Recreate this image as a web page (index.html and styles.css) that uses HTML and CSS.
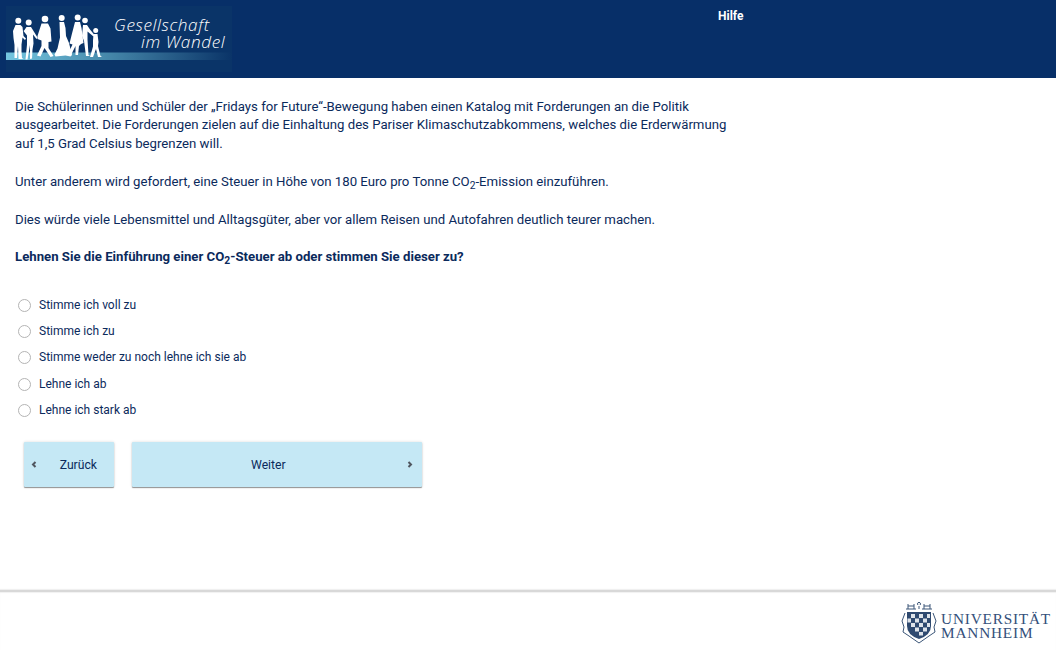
FILE: index.html
```html
<!doctype html>
<html>
<head>
    <meta charset="utf-8">
    <link rel="stylesheet" href="styles.css">
</head>
<body>
    <header class="top">
        <div class="logo">
            <svg class="logo-art" width="226" height="66" viewBox="6 6 226 66">
                <defs>
                    <linearGradient id="bar" x1="0" x2="1" y1="0" y2="0">
                        <stop offset="0" stop-color="#74c6e0"/>
                        <stop offset="0.4" stop-color="#4b8fb0"/>
                        <stop offset="1" stop-color="#0a3468"/>
                    </linearGradient>
                </defs>
                <rect x="6" y="52.500" width="226" height="7.500" fill="url(#bar)"/>
                <g fill="#fff">
                    <circle cx="18.300" cy="20.800" r="3"/>
                    <path d="M15.500 25l5 0 2 2 1 9 2.500 2.500-1 1.500-2.500-2.500-1 7 0 7 .5 6.500 1.500 1-5 0-.5-13-1 12-2.500 0 0-13-1-7-.5-7z"/>
                    <circle cx="28.700" cy="22.500" r="3"/>
                    <path d="M26.500 27l4.500 0 2.500 4 4 6.500-1 1.500-3.500-4.500.5 9-1 6-.5 9-2 .5 0-14-2.500 14.500-2 0 1.500-15 0-9-3.500-4.500 1-1z"/>
                    <circle cx="45" cy="19" r="3.300"/>
                    <path d="M41.500 23.500l6.500 0 2.500 5 1 13-3 .5 0 6 5 8-3 1-6-9-4 8.500-3.500-1 4.500-9.500 0-5.500-4-1.500 0-3z"/>
                    <circle cx="61.700" cy="18" r="3"/>
                    <path d="M59.500 22l4.500 0 1.500 6 .5 8 3 7 3 12-1.500 1.500-5-1-10 1-1-2 3-6 2.500-11z"/>
                    <circle cx="77.700" cy="17.500" r="3"/>
                    <path d="M75 22l5 0 1.500 6 2 15-2.500 1-2 2-1 9-2.500 0 0-9-5 10-3-1 5-10.500-3-1 2.500-10z"/>
                    <circle cx="85" cy="20.500" r="2.800"/>
                    <path d="M83 25l4 0 3 4.500 4.500 5.500-1 1.500-6-5 0 8 1 15.500 1.500 1-4 0-2-15-2-5z"/>
                    <circle cx="95.700" cy="30.500" r="2.500"/>
                    <path d="M93.500 34l4 0 1 8-.5 4 2.500 10 1.500 1-4 0-2-8-3 8-3 0 3-10.500 0-6z"/>
                </g>
            </svg>
            <span class="logo-line1">Gesellschaft</span>
            <span class="logo-line2">im Wandel</span>
        </div>
        <a class="help">Hilfe</a>
    </header>

    <main class="content">
        <p class="intro">Die Schülerinnen und Schüler der „Fridays for Future“-Bewegung haben einen Katalog mit Forderungen an die Politik ausgearbeitet. Die Forderungen zielen auf die Einhaltung des Pariser Klimaschutzabkommens, welches die Erderwärmung auf 1,5 Grad Celsius begrenzen will.<br><br>Unter anderem wird gefordert, eine Steuer in Höhe von 180 Euro pro Tonne CO<sub>2</sub>-Emission einzuführen.<br><br>Dies würde viele Lebensmittel und Alltagsgüter, aber vor allem Reisen und Autofahren deutlich teurer machen.<br><br><b>Lehnen Sie die Einführung einer CO<sub>2</sub>-Steuer ab oder stimmen Sie dieser zu?</b></p>

        <ul class="answers">
            <li><span class="radio"></span>Stimme ich voll zu</li>
            <li><span class="radio"></span>Stimme ich zu</li>
            <li><span class="radio"></span>Stimme weder zu noch lehne ich sie ab</li>
            <li><span class="radio"></span>Lehne ich ab</li>
            <li><span class="radio"></span>Lehne ich stark ab</li>
        </ul>

        <div class="buttons">
            <button class="btn btn-back">
                <svg width="6" height="7" viewBox="0 0 6 7"><path d="M4.500 1L2 3.500l2.500 2.500" fill="none" stroke="#50565f" stroke-width="2"/></svg>
                <span>Zurück</span>
            </button>
            <button class="btn btn-next">
                <span>Weiter</span>
                <svg width="6" height="7" viewBox="0 0 6 7"><path d="M1.500 1L4 3.500 1.500 6" fill="none" stroke="#50565f" stroke-width="2"/></svg>
            </button>
        </div>
    </main>

    <footer class="bottom">
        <div class="uni">
            <svg class="uni-seal" width="36" height="42" viewBox="0 0 36 42">
                <g fill="none" stroke="#3c5678" stroke-width="1">
                    <path d="M7 2v5M7 4h6M13 2v5M5 7h10M17 3a1.500 1.500 0 1 1 2 0M18 4v3M23 2v5M29 2v5M23 4h6M21 7h10"/>
                    <path d="M4 11L1 19l2 6-1 5 6 4 10 7 10-7 6-4-1-5 2-6-3-8"/>
                </g>
                <path d="M6 10h24v14q0 9-12 13Q6 33 6 24z" fill="#2f4a70"/>
                <g fill="#dfe4ea">
                    <rect x="10" y="12" width="4" height="4"/><rect x="18" y="12" width="4" height="4"/><rect x="26" y="12" width="3" height="4"/>
                    <rect x="6.500" y="16.500" width="3.500" height="4"/><rect x="14" y="16.500" width="4" height="4"/><rect x="22" y="16.500" width="4" height="4"/>
                    <rect x="10" y="21" width="4" height="4"/><rect x="18" y="21" width="4" height="4"/><rect x="26" y="21" width="3" height="4"/>
                    <rect x="14" y="25.500" width="4" height="4"/><rect x="22" y="25.500" width="4" height="4"/>
                    <rect x="18" y="30" width="4" height="3.500"/>
                </g>
            </svg>
            <div class="uni-name">UNIVERSITÄT<br>MANNHEIM</div>
        </div>
    </footer>
</body>
</html>
```

FILE: styles.css
```css
* {
    box-sizing: border-box;
}

html, body {
    margin: 0;
    padding: 0;
    height: 100%;
}

body {
    display: flex;
    flex-direction: column;
    height: 650px;
    overflow: hidden;
    background: #fff;
    color: #0b2a5c;
    font-family: Roboto, "Liberation Sans", sans-serif;
    font-size: 13.2px;
    line-height: 1.42857;
}

/* header */
.top {
    position: relative;
    display: flex;
    flex: 0 0 78px;
    background: #072f68;
}

.logo {
    position: relative;
    width: 226px;
    height: 66px;
    margin: 6px 0 0 6px;
    background: #0a3468;
}

.logo-art {
    display: block;
}

.logo-line1,
.logo-line2 {
    position: absolute;
    color: #fff;
    font-family: "Open Sans", sans-serif;
    font-style: italic;
    font-weight: 300;
    font-size: 17.200px;
    line-height: 17px;
    letter-spacing: 0.6px;
    white-space: nowrap;
}

.logo-line1 {
    left: 108px;
    top: 10px;
}

.logo-line2 {
    left: 135px;
    top: 27px;
}

.help {
    margin: 7px 0 0 486px;
    color: #fff;
    font-size: 12px;
    font-weight: 700;
    line-height: 18px;
}

/* question */
.content {
    flex: 1;
    padding: 19.600px 15px 0;
}

.intro {
    width: 720px;
    margin: 0;
}

sub {
    font-size: 78%;
    line-height: 0;
    vertical-align: -3px;
}

.answers {
    margin: 25.100px 0 0;
    padding: 0 0 0 3px;
    list-style: none;
}

.answers li {
    display: flex;
    align-items: center;
    height: 26.200px;
    font-size: 12px;
}

.radio {
    flex: none;
    width: 13px;
    height: 13px;
    margin-right: 8px;
    border: 1px solid #b4b4b4;
    border-radius: 50%;
    background: #fff;
}

.buttons {
    display: flex;
    gap: 18px;
    margin: 19px 0 0 9px;
}

.btn {
    display: flex;
    align-items: center;
    height: 45px;
    padding: 0 9px 0 7px;
    border: 0;
    border-radius: 1px;
    background: #c5e8f5;
    color: #0b2a5c;
    font-family: inherit;
    font-size: 12.200px;
    box-shadow: 0 1px 1px rgba(0, 0, 0, 0.4), 0 0 3px rgba(0, 0, 0, 0.15);
}

.btn-back {
    width: 90px;
    justify-content: space-between;
    padding-right: 17px;
}

.btn-next {
    width: 290px;
    justify-content: space-between;
    padding-left: 119px;
}

/* footer */
.bottom {
    display: flex;
    flex: 0 0 60px;
    justify-content: flex-end;
    border-top: 2px solid #d8d8d8;
    box-shadow: 0 -1px 1px rgba(0, 0, 0, 0.06), inset 0 1px 1px rgba(0, 0, 0, 0.06);
}

.uni {
    display: flex;
    align-items: flex-start;
    padding: 10px 5px 0 0;
}

.uni-seal {
    margin-right: 4px;
}

.uni-name {
    padding-top: 10px;
    color: #34507a;
    font-family: "Liberation Serif", serif;
    font-size: 15.300px;
    line-height: 14px;
    letter-spacing: 0.8px;
}
```
